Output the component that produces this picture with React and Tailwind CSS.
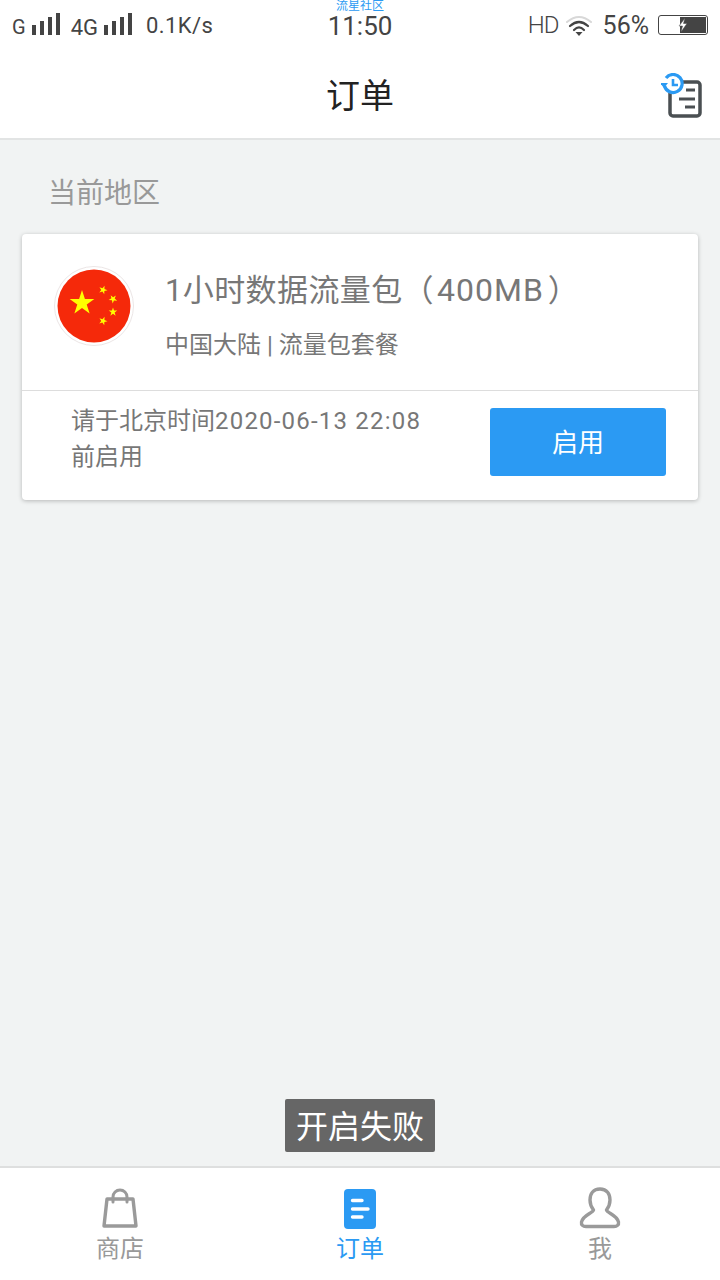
const font = { fontFamily: 'Roboto, "Noto Sans CJK SC", sans-serif' };

function Bars() {
    return (
        <svg width="30" height="24" viewBox="0 0 30 24" fill="#444">
            <rect x="0" y="12" width="4" height="10" />
            <rect x="8" y="8" width="4" height="14" />
            <rect x="16" y="4" width="4" height="18" />
            <rect x="24" y="0" width="4" height="22" />
        </svg>
    );
}

function Wifi() {
    return (
        <svg width="28" height="24" viewBox="0 0 28 24" fill="none" strokeLinecap="round">
            <path d="M2 9 Q14 -1 26 9" stroke="#d8d8d8" strokeWidth="2" />
            <path d="M5 13 Q14 5 23 13" stroke="#444" strokeWidth="2.2" />
            <path d="M9 17 Q14 12 19 17" stroke="#444" strokeWidth="2.2" />
            <path d="M10.5 19 L17.5 19 L14 23 Z" fill="#444" />
        </svg>
    );
}

function Battery() {
    return (
        <div className="relative flex h-[20px] w-[50px] justify-end rounded-[3px] border border-[#444] bg-white p-px">
            <div className="h-full w-[26px] bg-[#444]" />
            <svg className="absolute left-[18px] top-[1px]" width="12" height="16" viewBox="0 0 12 16" fill="#fff" stroke="#444" strokeWidth="0.5">
                <path d="M8 1 L2 9 L5.5 9 L4 15 L10 6.5 L6.5 6.5 Z" />
            </svg>
        </div>
    );
}

function HistoryIcon() {
    return (
        <svg width="42" height="46" viewBox="0 0 42 46" fill="none">
            <rect x="9" y="9" width="30" height="34" rx="3" stroke="#4a4f52" strokeWidth="3.5" />
            <path d="M25 17 H34 M18 26 H34 M24 34 H34" stroke="#4a4f52" strokeWidth="3.2" />
            <circle cx="12" cy="11" r="10" fill="#fff" />
            <path d="M5 5 A9 9 0 1 1 3.5 13" stroke="#2b9af3" strokeWidth="3.2" />
            <path d="M-1 10 L7 10 L3 15 Z" fill="#2b9af3" />
            <path d="M12 6 V12 H17" stroke="#2b9af3" strokeWidth="2.6" />
        </svg>
    );
}

function star(cx, cy, r, rotate = 0) {
    const pts = [];
    for (let i = 0; i < 10; i++) {
        const rad = i % 2 === 0 ? r : r * 0.382;
        const a = ((-90 + rotate + i * 36) * Math.PI) / 180;
        pts.push(`${(cx + rad * Math.cos(a)).toFixed(2)},${(cy + rad * Math.sin(a)).toFixed(2)}`);
    }
    return <polygon key={`${cx}-${cy}`} points={pts.join(' ')} fill="#ffff00" />;
}

function Flag() {
    return (
        <svg width="80" height="80" viewBox="0 0 80 80" className="shrink-0">
            <circle cx="40" cy="40" r="39.5" fill="#fff" stroke="#ece6e6" />
            <circle cx="40" cy="40" r="36.5" fill="#f5290a" />
            {star(28, 37, 13)}
            {star(49, 24, 4.5, 20)}
            {star(59, 33, 4.5, 40)}
            {star(59, 46, 4.5, 0)}
            {star(49, 55, 4.5, 20)}
        </svg>
    );
}

function BagIcon() {
    return (
        <svg width="38" height="42" viewBox="0 0 38 42" fill="none" stroke="#9a9a9a">
            <path d="M6 12 H32 L35 39 H3 Z" strokeWidth="3.4" strokeLinejoin="round" />
            <path d="M12 15 V10 A7 7 0 0 1 26 10 V15" strokeWidth="3" strokeLinecap="round" />
        </svg>
    );
}

function OrderIcon() {
    return (
        <svg width="32" height="40" viewBox="0 0 32 40">
            <rect width="32" height="40" rx="4" fill="#2b9af3" />
            <path d="M8.5 11.5 H18 M8.5 20 H24 M8.5 28 H18" stroke="#fff" strokeWidth="3.4" strokeLinecap="round" />
        </svg>
    );
}

function UserIcon() {
    return (
        <svg width="42" height="42" viewBox="0 0 42 42" fill="none" stroke="#9a9a9a" strokeWidth="3.4" strokeLinejoin="round">
            <path d="M21 2 C14 2 11 7 11 13 C11 18 13 21 14.5 23 C14 26 4 28 2.5 35 C2 38 4 39.5 7 39.5 H35 C38 39.5 40 38 39.5 35 C38 28 28 26 27.5 23 C29 21 31 18 31 13 C31 7 28 2 21 2 Z" />
        </svg>
    );
}

function Tab({ icon, label, active }) {
    return (
        <div className="flex flex-1 flex-col items-center">
            <div className="flex h-[42px] items-end">{icon}</div>
            <span className={`mt-[5px] text-[24px] leading-[30px] ${active ? 'text-[#2b9af3]' : 'text-[#999999]'}`}>{label}</span>
        </div>
    );
}

export default function App() {
    return (
        <div className="relative flex h-[1280px] w-[720px] flex-col overflow-hidden bg-[#f1f3f3]" style={font}>
            {/* Status bar */}
            <div className="grid h-[50px] grid-cols-3 bg-white text-[#444444]">
                <div className="flex items-center pl-[12px] text-[22px]">
                    <span className="mr-[6px] mt-[4px] text-[20px]">G</span>
                    <Bars />
                    <span className="ml-[9px] mr-[6px] mt-[4px] text-[22px]">4G</span>
                    <Bars />
                    <span className="ml-[12px] text-[22px] tracking-[0.4px]">0.1K/s</span>
                </div>
                <div className="flex flex-col items-center overflow-visible">
                    <span className="h-[12px] text-[12px] leading-[12px] text-[#2b9af3]">流星社区</span>
                    <span className="text-[26px] leading-[28px]">11:50</span>
                </div>
                <div className="flex items-center justify-end pr-[12px]">
                    <span className="mr-[6px] text-[24px] font-light tracking-[-1px]">HD</span>
                    <Wifi />
                    <span className="ml-[10px] mr-[9px] mt-px text-[25px]">56%</span>
                    <Battery />
                </div>
            </div>

            {/* Header */}
            <div className="flex h-[90px] items-center justify-between border-b-2 border-[#e2e4e4] bg-white pl-[326px] pr-[17px] pt-[4px]">
                <span className="text-[34px] leading-[44px] text-[#222222]">订单</span>
                <HistoryIcon />
            </div>

            {/* Content */}
            <div className="flex-1 px-[22px]">
                <div className="pl-[26px] pt-[37px] text-[28px] leading-[34px] text-[#999999]">当前地区</div>
                <div className="mt-[23px] rounded-[4px] bg-white shadow-[0_1px_4px_rgba(0,0,0,0.25)]">
                    <div className="flex h-[157px] items-start gap-[31px] border-b border-[#dddddd] pl-[32px] pt-[32px]">
                        <Flag />
                        <div className="mt-[2px] text-[#777777]">
                            <div className="text-[31px] leading-[44px] tracking-[0.4px]">
                                1小时数据流量包（<span className="ml-[3px] mr-[4px] text-[32px] tracking-[1px]">400MB</span>）
                            </div>
                            <div className="mt-[16px] text-[24px] leading-[32px]">中国大陆 | 流量包套餐</div>
                        </div>
                    </div>
                    <div className="flex h-[109px] items-center justify-between pl-[49px] pr-[32px]">
                        <div className="mt-[-14px] text-[24px] leading-[36px] text-[#777777]">
                            请于北京时间<span className="tracking-[1.2px]">2020-06-13 22:08</span>
                            <br />
                            前启用
                        </div>
                        <button className="mt-[-8px] h-[68px] w-[176px] rounded-[3px] bg-[#2b9af3] pt-[4px] text-[26px] text-white">启用</button>
                    </div>
                </div>
            </div>

            {/* Bottom tabs */}
            <div className="flex h-[114px] border-t-2 border-[#dedfdf] bg-white pt-[19px]">
                <Tab icon={<BagIcon />} label="商店" />
                <Tab icon={<OrderIcon />} label="订单" active />
                <Tab icon={<UserIcon />} label="我" />
            </div>

            {/* Toast */}
            <div className="absolute left-[285px] top-[1099px] flex h-[53px] w-[150px] items-center justify-center rounded-[2px] bg-[#666666] pt-[3px] text-[32px] text-white">
                开启失败
            </div>
        </div>
    );
}
